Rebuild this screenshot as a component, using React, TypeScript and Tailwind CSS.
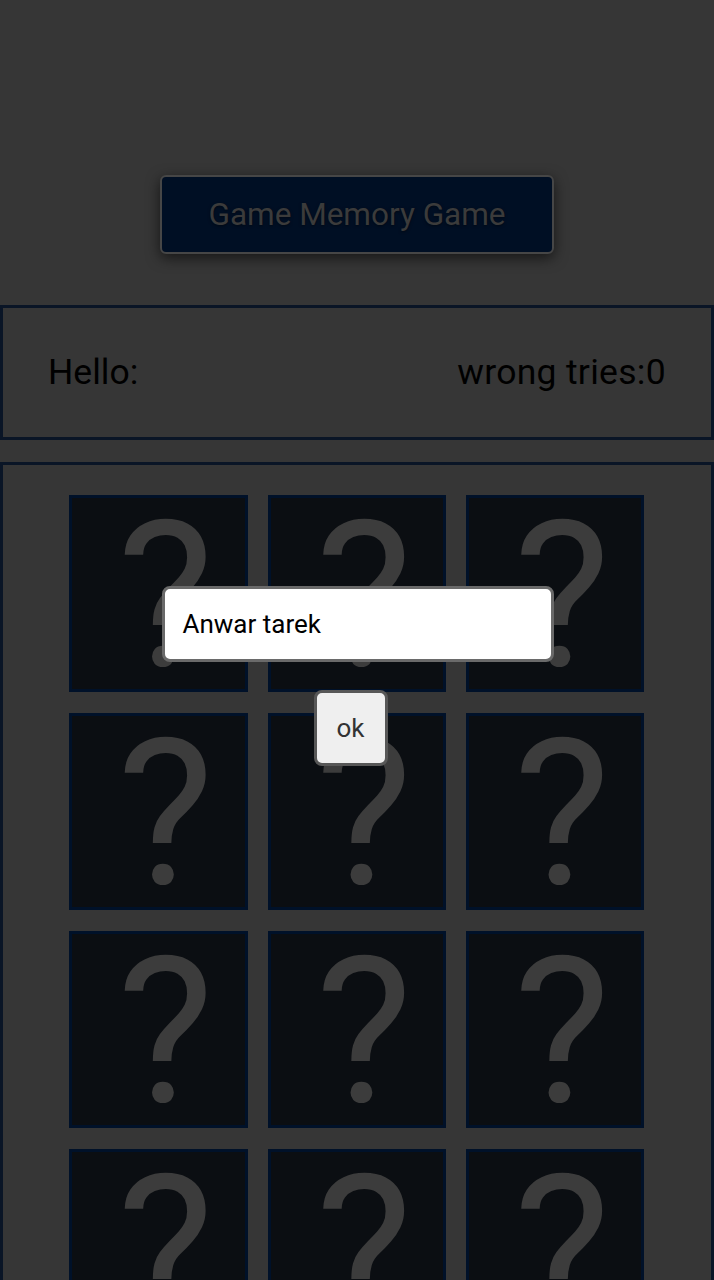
import React from "react";

const App: React.FC = () => {
  const cards = Array.from({ length: 12 }, (_, i) => i);

  return (
    <div className="relative min-h-screen bg-[#363636] font-['Roboto',sans-serif] overflow-hidden h-[1280px]">
      {/* Title */}
      <div className="flex justify-center pt-[175px]">
        <div className="w-[394px] h-[79px] flex items-center justify-center rounded-md bg-[#000f24] border-2 border-[#464646] shadow-[0_4px_14px_rgba(0,0,0,0.6)]">
          <span className="text-[31.5px] text-[#3b3b3b] [text-shadow:0_1px_3px_rgba(0,0,0,0.5)]">
            Game Memory Game
          </span>
        </div>
      </div>

      {/* Info */}
      <div className="mt-[51px] h-[135px] border-[3px] border-[#0a1526] flex items-center justify-between px-[45px] text-[35.5px] text-black">
        <span>Hello:</span>
        <span className="tracking-[0.3px]">wrong tries:0</span>
      </div>

      {/* Board */}
      <div className="mt-[22px] border-[3px] border-[#0a1526] pt-[30px] pb-10">
        <div className="grid grid-cols-[179px_178px_178px] justify-center gap-x-[20px] gap-y-[21px] -ml-[1px]">
          {cards.map((c) => (
            <div
              key={c}
              className="h-[197px] bg-[#0b0e12] border-[3px] border-[#001129] flex items-center justify-center overflow-hidden"
            >
              <span className="text-[204px] leading-none text-[#3c3c3c] mt-[6px] pl-[14px]">
                ?
              </span>
            </div>
          ))}
        </div>
      </div>

      {/* Prompt dialog */}
      <div className="absolute left-0 right-0 top-[586px] flex flex-col items-center">
        <div className="w-[392px] h-[76px] ml-[1px] bg-white rounded-lg border-[3px] border-[#6a6a6a] flex items-center px-[18px]">
          <span className="text-[26px] text-black">Anwar tarek</span>
        </div>
        <div className="mt-[28px] mr-[13px] w-[74px] h-[76px] bg-[#efefef] rounded-lg border-[3px] border-[#575757] flex items-center justify-center">
          <span className="text-[26px] text-[#333]">ok</span>
        </div>
      </div>
    </div>
  );
};

export default App;
